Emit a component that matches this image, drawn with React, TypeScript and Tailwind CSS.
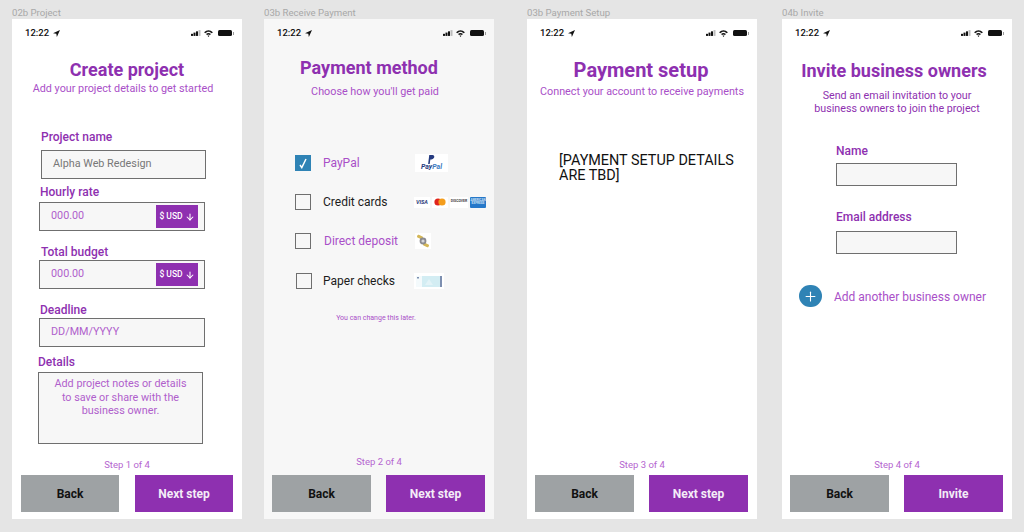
import { ArrowDown, Plus } from 'lucide-react';
import type { ReactNode } from 'react';

function StatusBar() {
  return (
    <div className="flex h-[20px] items-center justify-between pl-[13px] pr-[8px] pt-[8px]">
      <div className="flex items-center gap-[4px] text-[9.5px] font-medium text-[#111]">
        12:22
        <svg width="7" height="7" viewBox="0 0 8 8">
          <path d="M8 0 L0 3.6 L3.8 4.2 L4.4 8 Z" fill="#111" />
        </svg>
      </div>
      <div className="flex items-center gap-[3px]">
        <svg width="10" height="6" viewBox="0 0 12 7" fill="#111">
          <rect x="0" y="4.5" width="2.4" height="2.5" />
          <rect x="3" y="3" width="2.4" height="4" />
          <rect x="6" y="1.5" width="2.4" height="5.5" />
          <rect x="9" y="0" width="2.4" height="7" fill="#bbb" />
        </svg>
        <svg width="9" height="7" viewBox="0 0 10 8">
          <path d="M0 2.6 C3 -0.6 7 -0.6 10 2.6 L8.8 3.8 C6.4 1.4 3.6 1.4 1.2 3.8 Z" fill="#111" />
          <path d="M2.2 4.7 C4 3 6 3 7.8 4.7 L6.7 5.8 C5.6 4.8 4.4 4.8 3.3 5.8 Z" fill="#111" />
          <path d="M3.9 6.6 C4.6 6 5.4 6 6.1 6.6 L5 8 Z" fill="#111" />
        </svg>
        <div className="ml-[2px] h-[6px] w-[14px] rounded-[1.5px] bg-[#111]" />
        <div className="-ml-[2px] h-[3px] w-[1px] bg-[#999]" />
      </div>
    </div>
  );
}

function Footer({ step, next, first, raised }: { step: string; next: string; first?: boolean; raised?: boolean }) {
  const width = first ? 'w-[98px]' : 'w-[99px]';
  return (
    <div className="mt-auto pb-[7px]">
      <p className={`text-center text-[9.5px] leading-[12px] text-[#b565d0] ${raised ? 'mb-[7px]' : 'mb-[4px]'}`}>{step}</p>
      <div className={`flex justify-between pr-[9px] ${first ? 'pl-[9px]' : 'pl-[8px]'}`}>
        <div className={`flex h-[37px] items-center justify-center bg-[#9ea2a4] text-[12px] font-bold text-[#111] ${width}`}>
          Back
        </div>
        <div className={`flex h-[37px] items-center justify-center bg-[#8e30b0] text-[12px] font-bold text-[#f4ecf7] ${width}`}>
          {next}
        </div>
      </div>
    </div>
  );
}

function Phone({ label, gray, children }: { label: string; gray?: boolean; children: ReactNode }) {
  return (
    <div className="flex w-[230px] shrink-0 flex-col">
      <p className="h-[19px] pt-[8px] text-[9.6px] leading-[10px] text-[#a8a8a8]">{label}</p>
      <div className={`flex h-[500px] flex-col ${gray ? 'bg-[#f7f7f7]' : 'bg-white'}`}>{children}</div>
    </div>
  );
}

function FieldLabel({ children, className }: { children: ReactNode; className: string }) {
  return <p className={`text-[12px] font-medium leading-[14px] text-[#8e30b0] ${className}`}>{children}</p>;
}

function Input({ children, usd, className }: { children?: ReactNode; usd?: boolean; className: string }) {
  return (
    <div className={`flex items-center justify-between border border-[#6f6f6f] bg-[#f7f7f7] text-[10.8px] text-[#b060cc] ${className}`}>
      <span className="pl-[11px]">{children}</span>
      {usd && (
        <span className="mr-[6px] flex h-[23px] w-[42px] items-center justify-center gap-[2px] bg-[#8e30b0] text-[8.5px] font-medium text-white">
          $ USD <ArrowDown size={10} strokeWidth={2.5} />
        </span>
      )}
    </div>
  );
}

function CreateProject() {
  return (
    <Phone label="02b Project">
      <StatusBar />
      <h1 className="mt-[19px] text-center text-[18px] font-bold leading-[24px] text-[#8e30b0]">Create project</h1>
      <p className="pr-[8px] text-center text-[10.8px] leading-[14px] text-[#a94fc8]">Add your project details to get started</p>
      <FieldLabel className="ml-[29px] mt-[34px]">Project name</FieldLabel>
      <Input className="ml-[29px] mt-[6px] h-[29px] w-[165px] !text-[#777]">Alpha Web Redesign</Input>
      <FieldLabel className="ml-[28px] mt-[6px]">Hourly rate</FieldLabel>
      <Input usd className="ml-[27px] mt-[3px] h-[29px] w-[166px]">000.00</Input>
      <FieldLabel className="ml-[29px] mt-[14px]">Total budget</FieldLabel>
      <Input usd className="ml-[27px] mt-[1px] h-[29px] w-[166px]">000.00</Input>
      <FieldLabel className="ml-[28px] mt-[14px]">Deadline</FieldLabel>
      <Input className="ml-[27px] mt-[1px] h-[29px] w-[166px]">DD/MM/YYYY</Input>
      <FieldLabel className="ml-[26px] mt-[8px]">Details</FieldLabel>
      <div className="ml-[26px] mt-[3px] h-[72px] w-[165px] border border-[#6f6f6f] bg-[#f7f7f7] px-[12px] pt-[4px] text-center text-[10.8px] leading-[13.5px] text-[#b060cc]">
        Add project notes or details to save or share with the business owner.
      </div>
      <Footer first step="Step 1 of 4" next="Next step" />
    </Phone>
  );
}

function PaypalLogo() {
  return (
    <div className="flex h-[18px] w-[33px] flex-col items-center bg-white">
      <svg width="7" height="9" viewBox="0 0 6 8" className="mt-[1px]">
        <path d="M1 0 H4 C6 0 6.3 3.6 3 3.9 H2 L1.4 8 H0 Z" fill="#253b80" />
      </svg>
      <span className="text-[7px] font-bold italic leading-[7px] text-[#253b80]">
        Pay<span className="text-[#3b7bbf]">Pal</span>
      </span>
    </div>
  );
}

function CardLogos() {
  return (
    <div className="flex items-center gap-[2px]">
      <div className="flex h-[11px] w-[16px] items-center justify-center bg-white text-[5.5px] font-bold italic text-[#2a3a7c]">VISA</div>
      <div className="flex h-[11px] w-[16px] items-center justify-center bg-white">
        <svg width="12" height="8" viewBox="0 0 12 8">
          <circle cx="4" cy="4" r="3.6" fill="#e0231c" />
          <circle cx="8" cy="4" r="3.6" fill="#f49d1c" />
        </svg>
      </div>
      <div className="flex h-[11px] w-[18px] items-center justify-center overflow-hidden bg-white text-[3.5px] font-bold text-[#444]">DISCOVER</div>
      <div className="flex h-[11px] w-[16px] items-center justify-center rounded-[1px] bg-[#2678c9] text-center text-[3px] font-bold leading-[3.5px] text-[#cfe3f5]">
        AMERICAN
        <br />
        EXPRESS
      </div>
    </div>
  );
}

function DepositLogo() {
  return (
    <div className="flex h-[16px] w-[16px] items-center justify-center bg-white">
      <svg width="14" height="14" viewBox="0 0 14 14">
        <rect x="1" y="1.5" width="6" height="3" rx="1" fill="#d4b656" transform="rotate(25 4 3)" />
        <rect x="7" y="9.5" width="6" height="3" rx="1" fill="#d4b656" transform="rotate(25 10 11)" />
        <circle cx="7" cy="7" r="3.4" fill="#8b8b90" />
        <circle cx="7" cy="7" r="1.6" fill="#d5d5da" />
      </svg>
    </div>
  );
}

function CheckLogo() {
  return (
    <div className="flex h-[16px] w-[30px] items-center justify-center bg-white">
      <svg width="26" height="11" viewBox="0 0 26 11">
        <rect width="26" height="11" fill="#d3edf3" />
        <rect width="6" height="11" fill="#f4fafc" />
        <rect x="1" y="1" width="2" height="1.5" fill="#7d8fb0" />
        <path d="M13 3 L17 9 H9 Z" fill="#e3f3f7" />
        <rect x="24" width="2" height="11" fill="#7d8fb0" />
      </svg>
    </div>
  );
}

function MethodRow({ label, checked, purple, logo, rowClass, textClass }: {
  label: string;
  checked?: boolean;
  purple?: boolean;
  logo: ReactNode;
  rowClass: string;
  textClass: string;
}) {
  return (
    <div className={`relative flex h-[16px] items-center ${rowClass}`}>
      {checked ? (
        <div className="flex h-[16px] w-[16px] items-center justify-center bg-[#2f83b5]">
          <svg width="8" height="11" viewBox="0 0 8 11" fill="none">
            <path d="M1 7 L2.8 9.6 L7 1" stroke="white" strokeWidth="1.5" />
          </svg>
        </div>
      ) : (
        <div className="h-[16px] w-[16px] border border-[#6f6f6f] bg-[#f7f7f7]" />
      )}
      <span className={`text-[12px] ${purple ? 'text-[#a94fc8]' : 'text-[#1c1c1c]'} ${textClass}`}>{label}</span>
      {logo}
    </div>
  );
}

function PaymentMethod() {
  return (
    <Phone label="03b Receive Payment" gray>
      <StatusBar />
      <h1 className="mt-[17px] pr-[20px] text-center text-[18px] font-bold leading-[24px] text-[#8e30b0]">Payment method</h1>
      <p className="mt-[5px] pr-[8px] text-center text-[10.8px] leading-[14px] text-[#a94fc8]">Choose how you'll get paid</p>
      <div className="mt-[56px] flex flex-col pl-[31px]">
        <MethodRow checked purple label="PayPal" rowClass="" textClass="ml-[12px] w-[92px]" logo={<PaypalLogo />} />
        <MethodRow label="Credit cards" rowClass="mt-[23px]" textClass="ml-[12px] w-[91px]" logo={<CardLogos />} />
        <MethodRow purple label="Direct deposit" rowClass="mt-[23px]" textClass="ml-[13px] w-[91px]" logo={<DepositLogo />} />
        <MethodRow label="Paper checks" rowClass="ml-[1px] mt-[24px]" textClass="ml-[11px] w-[91px]" logo={<CheckLogo />} />
      </div>
      <p className="mt-[25px] pr-[6px] text-center text-[7px] leading-[9px] text-[#a94fc8]">You can change this later.</p>
      <Footer raised step="Step 2 of 4" next="Next step" />
    </Phone>
  );
}

function PaymentSetup() {
  return (
    <Phone label="03b Payment Setup">
      <StatusBar />
      <h1 className="mt-[19px] pr-[2px] text-center text-[20px] font-bold leading-[24px] text-[#8e30b0]">Payment setup</h1>
      <p className="mt-[3px] text-center text-[10.8px] leading-[14px] text-[#a94fc8]">Connect your account to receive payments</p>
      <p className="ml-[32px] mt-[54px] text-[14.4px] leading-[15px] text-[#111]">
        [PAYMENT SETUP DETAILS
        <br />
        ARE TBD]
      </p>
      <Footer step="Step 3 of 4" next="Next step" />
    </Phone>
  );
}

function InviteOwners() {
  return (
    <Phone label="04b Invite">
      <StatusBar />
      <h1 className="mt-[20px] pr-[6px] text-center text-[18px] font-bold leading-[24px] text-[#8e30b0]">Invite business owners</h1>
      <p className="mt-[6px] text-center text-[10.7px] leading-[13px] text-[#8e30b0]">
        Send an email invitation to your
        <br />
        business owners to join the project
      </p>
      <FieldLabel className="ml-[54px] mt-[29px]">Name</FieldLabel>
      <Input className="ml-[54px] mt-[5px] h-[23px] w-[121px]" />
      <FieldLabel className="ml-[54px] mt-[24px]">Email address</FieldLabel>
      <Input className="ml-[54px] mt-[7px] h-[23px] w-[121px]" />
      <div className="ml-[17px] mt-[31px] flex items-center">
        <div className="flex h-[22px] w-[23px] items-center justify-center rounded-full bg-[#2f83b5]">
          <Plus size={15} strokeWidth={1.75} className="text-white" />
        </div>
        <span className="ml-[12px] pt-[1px] text-[12px] text-[#a94fc8]">Add another business owner</span>
      </div>
      <Footer step="Step 4 of 4" next="Invite" />
    </Phone>
  );
}

export default function App() {
  return (
    <div className="h-[532px] w-[1024px] overflow-hidden bg-[#e5e5e5] font-['Roboto',sans-serif]">
      <div className="flex pl-[12px]">
        <CreateProject />
        <div className="ml-[22px]"><PaymentMethod /></div>
        <div className="ml-[33px]"><PaymentSetup /></div>
        <div className="ml-[25px]"><InviteOwners /></div>
      </div>
    </div>
  );
}
